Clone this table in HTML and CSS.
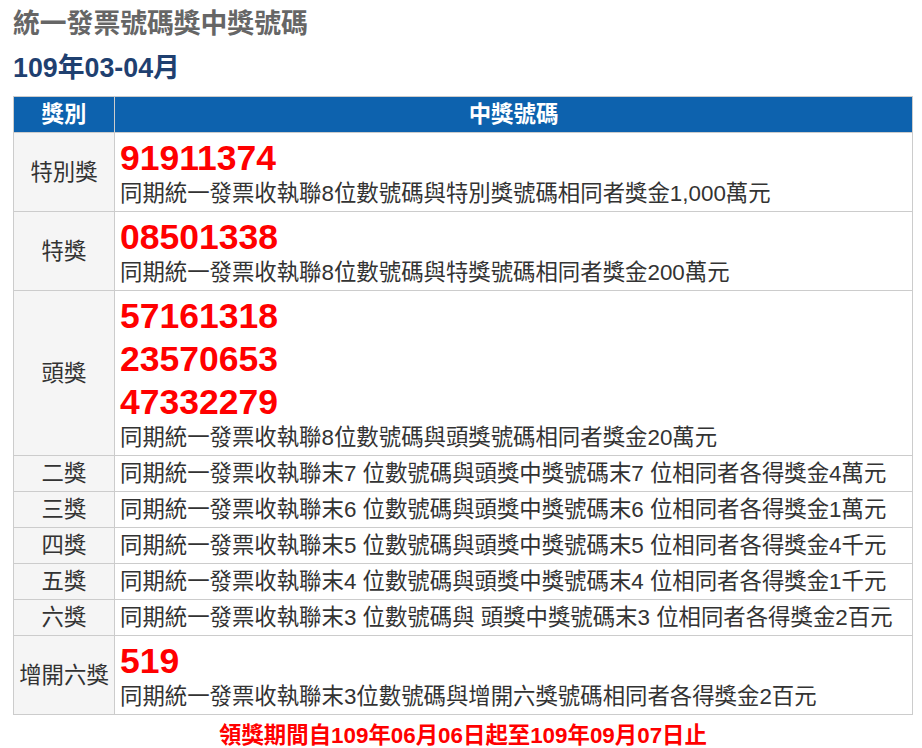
FILE: index.html
```html
<!DOCTYPE html>
<html lang="zh-Hant">
<head>
    <meta charset="UTF-8">
    <meta name="viewport" content="width=device-width, initial-scale=1.0">
    <title>統一發票號碼獎中獎號碼</title>
    <link rel="stylesheet" href="styles.css">
</head>
<body>
    <div class="page">
        <h1 class="title">統一發票號碼獎中獎號碼</h1>
        <h2 class="period">109年03-04月</h2>

        <table class="prize-table">
            <colgroup>
                <col class="col-name">
                <col>
            </colgroup>
            <thead>
                <tr>
                    <th>獎別</th>
                    <th>中獎號碼</th>
                </tr>
            </thead>
            <tbody>
                <tr>
                    <td class="name">特別獎</td>
                    <td>
                        <span class="number">91911374</span>
                        <span class="desc">同期統一發票收執聯8位數號碼與特別獎號碼相同者獎金1,000萬元</span>
                    </td>
                </tr>
                <tr>
                    <td class="name">特獎</td>
                    <td>
                        <span class="number">08501338</span>
                        <span class="desc">同期統一發票收執聯8位數號碼與特獎號碼相同者獎金200萬元</span>
                    </td>
                </tr>
                <tr>
                    <td class="name">頭獎</td>
                    <td>
                        <span class="number">57161318</span>
                        <span class="number">23570653</span>
                        <span class="number">47332279</span>
                        <span class="desc">同期統一發票收執聯8位數號碼與頭獎號碼相同者獎金20萬元</span>
                    </td>
                </tr>
                <tr>
                    <td class="name">二獎</td>
                    <td><span class="desc">同期統一發票收執聯末7 位數號碼與頭獎中獎號碼末7 位相同者各得獎金4萬元</span></td>
                </tr>
                <tr>
                    <td class="name">三獎</td>
                    <td><span class="desc">同期統一發票收執聯末6 位數號碼與頭獎中獎號碼末6 位相同者各得獎金1萬元</span></td>
                </tr>
                <tr>
                    <td class="name">四獎</td>
                    <td><span class="desc">同期統一發票收執聯末5 位數號碼與頭獎中獎號碼末5 位相同者各得獎金4千元</span></td>
                </tr>
                <tr>
                    <td class="name">五獎</td>
                    <td><span class="desc">同期統一發票收執聯末4 位數號碼與頭獎中獎號碼末4 位相同者各得獎金1千元</span></td>
                </tr>
                <tr>
                    <td class="name">六獎</td>
                    <td><span class="desc">同期統一發票收執聯末3 位數號碼與 頭獎中獎號碼末3 位相同者各得獎金2百元</span></td>
                </tr>
                <tr>
                    <td class="name">增開六獎</td>
                    <td>
                        <span class="number">519</span>
                        <span class="desc">同期統一發票收執聯末3位數號碼與增開六獎號碼相同者各得獎金2百元</span>
                    </td>
                </tr>
            </tbody>
        </table>

        <p class="claim">領獎期間自109年06月06日起至109年09月07日止</p>
    </div>
</body>
</html>
```

FILE: styles.css
```css
body {
    font-family: "Liberation Sans", "Noto Sans CJK TC", sans-serif;
    margin: 0;
    padding: 0;
    background-color: #fff;
    color: #333;
}

.page {
    padding: 0 9px 0 13px;
}

.title {
    margin: 7px 0 0;
    font-size: 26.8px;
    line-height: 34px;
    color: #666;
}

.period {
    margin: 10px 0 0;
    font-size: 26.8px;
    line-height: 34px;
    color: #1f4070;
}

.prize-table {
    width: 100%;
    margin-top: 11px;
    border-collapse: collapse;
    table-layout: fixed;
}

.col-name {
    width: 101px;
}

.prize-table th,
.prize-table td {
    border: 1px solid #ccc;
    padding: 4px 5px;
    font-size: 22.4px;
    line-height: 27px;
}

.prize-table th {
    background-color: #0d62ae;
    color: #fff;
    font-weight: bold;
    text-align: center;
}

.prize-table td {
    text-align: left;
    vertical-align: middle;
}

.prize-table td.name {
    background-color: #f5f5f5;
    text-align: center;
    padding: 4px 0;
}

.number {
    display: block;
    color: #f00;
    font-weight: bold;
    font-size: 35.5px;
    line-height: 43px;
}

.desc {
    display: block;
}

.claim {
    margin: 9px 0 0;
    text-align: center;
    color: #f00;
    font-weight: bold;
    font-size: 22.4px;
    line-height: 24px;
}
```
